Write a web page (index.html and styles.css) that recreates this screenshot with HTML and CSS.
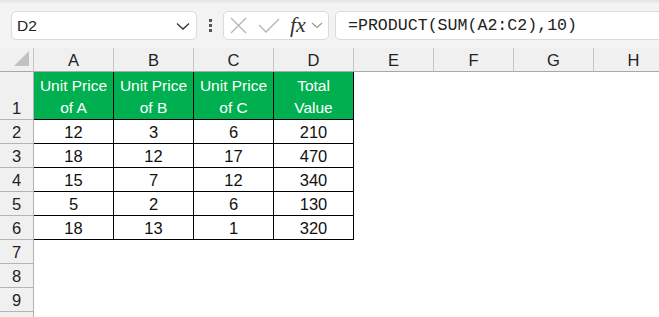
FILE: index.html
```html
<!DOCTYPE html>
<html lang="en">
<head>
    <meta charset="UTF-8">
    <meta name="viewport" content="width=device-width, initial-scale=1.0">
    <title>PRODUCT with SUM</title>
    <link rel="stylesheet" href="styles.css">
</head>
<body>

    <div class="toolbar">
        <div class="namebox">
            <span class="cell-ref">D2</span>
            <svg class="chevron" width="14" height="8" viewBox="0 0 14 8">
                <polyline points="1,1.5 7,7 13,1.5" />
            </svg>
        </div>

        <div class="dots">
            <span></span><span></span><span></span>
        </div>

        <div class="fx-box">
            <svg class="icon-x" width="17" height="17" viewBox="0 0 17 17">
                <line x1="1" y1="1" x2="16" y2="16" />
                <line x1="16" y1="1" x2="1" y2="16" />
            </svg>
            <svg class="icon-check" width="22" height="15" viewBox="0 0 22 15">
                <polyline points="1,7 8,14 21,1" />
            </svg>
            <span class="fx">fx</span>
            <svg class="icon-drop" width="12" height="7" viewBox="0 0 12 7">
                <polyline points="1,1 6,5.5 11,1" />
            </svg>
        </div>

        <div class="formula">=PRODUCT(SUM(A2:C2),10)</div>
    </div>

    <div class="sheet">
        <!-- column headers -->
        <div class="corner"><span class="tri"></span></div>
        <div class="col-head">A</div>
        <div class="col-head">B</div>
        <div class="col-head">C</div>
        <div class="col-head">D</div>
        <div class="col-head">E</div>
        <div class="col-head">F</div>
        <div class="col-head">G</div>
        <div class="col-head">H</div>

        <!-- row 1 -->
        <div class="row-head tall">1</div>
        <div class="cell data green">Unit Price<br>of A</div>
        <div class="cell data green">Unit Price<br>of B</div>
        <div class="cell data green">Unit Price<br>of C</div>
        <div class="cell data green">Total<br>Value</div>
        <div class="cell"></div><div class="cell"></div><div class="cell"></div><div class="cell"></div>

        <!-- row 2 -->
        <div class="row-head">2</div>
        <div class="cell data">12</div>
        <div class="cell data">3</div>
        <div class="cell data">6</div>
        <div class="cell data">210</div>
        <div class="cell"></div><div class="cell"></div><div class="cell"></div><div class="cell"></div>

        <!-- row 3 -->
        <div class="row-head">3</div>
        <div class="cell data">18</div>
        <div class="cell data">12</div>
        <div class="cell data">17</div>
        <div class="cell data">470</div>
        <div class="cell"></div><div class="cell"></div><div class="cell"></div><div class="cell"></div>

        <!-- row 4 -->
        <div class="row-head">4</div>
        <div class="cell data">15</div>
        <div class="cell data">7</div>
        <div class="cell data">12</div>
        <div class="cell data">340</div>
        <div class="cell"></div><div class="cell"></div><div class="cell"></div><div class="cell"></div>

        <!-- row 5 -->
        <div class="row-head">5</div>
        <div class="cell data">5</div>
        <div class="cell data">2</div>
        <div class="cell data">6</div>
        <div class="cell data">130</div>
        <div class="cell"></div><div class="cell"></div><div class="cell"></div><div class="cell"></div>

        <!-- row 6 -->
        <div class="row-head">6</div>
        <div class="cell data">18</div>
        <div class="cell data">13</div>
        <div class="cell data">1</div>
        <div class="cell data">320</div>
        <div class="cell"></div><div class="cell"></div><div class="cell"></div><div class="cell"></div>

        <!-- empty rows -->
        <div class="row-head">7</div>
        <div class="cell"></div><div class="cell"></div><div class="cell"></div><div class="cell"></div>
        <div class="cell"></div><div class="cell"></div><div class="cell"></div><div class="cell"></div>

        <div class="row-head">8</div>
        <div class="cell"></div><div class="cell"></div><div class="cell"></div><div class="cell"></div>
        <div class="cell"></div><div class="cell"></div><div class="cell"></div><div class="cell"></div>

        <div class="row-head">9</div>
        <div class="cell"></div><div class="cell"></div><div class="cell"></div><div class="cell"></div>
        <div class="cell"></div><div class="cell"></div><div class="cell"></div><div class="cell"></div>

        <!-- row 10 only peeks in at the bottom edge -->
        <div class="row-head"></div>
        <div class="cell"></div><div class="cell"></div><div class="cell"></div><div class="cell"></div>
        <div class="cell"></div><div class="cell"></div><div class="cell"></div><div class="cell"></div>
    </div>

</body>
</html>
```

FILE: styles.css
```css
body {
    margin: 0;
    padding: 0;
    width: 659px;
    height: 317px;
    overflow: hidden;
    background-color: #fff;
    font-family: 'Liberation Sans', Arial, sans-serif;
    color: #1a1a1a;
}

/* formula bar area */

.toolbar {
    display: flex;
    align-items: flex-start;
    height: 48px;
    padding: 11px 0 0 11px;
    box-sizing: border-box;
    background: linear-gradient(to bottom, #e3e3e3 0px, #efefef 3px, #f3f3f3 5px);
}

.namebox {
    display: flex;
    align-items: center;
    justify-content: space-between;
    width: 186px;
    height: 29px;
    box-sizing: border-box;
    padding: 0 6px 0 5px;
    background-color: #fff;
    border: 1px solid #dadada;
    border-radius: 5px;
}

.cell-ref {
    font-size: 15.5px;
    color: #222;
}

.chevron polyline {
    fill: none;
    stroke: #333;
    stroke-width: 1.3;
}

.dots {
    display: flex;
    flex-direction: column;
    align-items: center;
    gap: 2px;
    width: 26px;
    padding-top: 8px;
}

.dots span {
    width: 3px;
    height: 3px;
    background-color: #555;
}

.fx-box {
    display: flex;
    align-items: center;
    width: 106px;
    height: 29px;
    box-sizing: border-box;
    background-color: #fff;
    border: 1px solid #dadada;
    border-radius: 5px;
}

.icon-x {
    margin-left: 6px;
}

.icon-x line,
.icon-check polyline {
    fill: none;
    stroke: #b4b4b4;
    stroke-width: 1.3;
}

.icon-check {
    margin-left: 11px;
}

.fx {
    margin-left: 10px;
    margin-top: -2px;
    font-family: 'Liberation Serif', 'Times New Roman', serif;
    font-style: italic;
    font-size: 22px;
    color: #333;
    line-height: 1;
}

.icon-drop {
    margin-left: 5px;
}

.icon-drop polyline {
    fill: none;
    stroke: #999;
    stroke-width: 1.2;
}

.formula {
    flex: 1;
    margin-left: 6px;
    margin-right: -10px;
    height: 29px;
    box-sizing: border-box;
    padding: 0 0 0 12px;
    background-color: #fff;
    border: 1px solid #dadada;
    border-radius: 5px;
    font-family: 'Liberation Mono', 'Courier New', monospace;
    font-size: 16.6px;
    line-height: 28px;
    color: #222;
}

/* the grid */

.sheet {
    display: grid;
    grid-template-columns: 34px repeat(8, 80px);
    grid-template-rows: 24px 48px repeat(9, 24px);
}

.sheet > div {
    box-sizing: border-box;
}

.corner {
    display: flex;
    align-items: flex-end;
    justify-content: flex-end;
    padding: 0 4px 5px 0;
    background-color: #f0f0f0;
    border-right: 1px solid #c4c4c4;
    border-bottom: 1px solid #a8a8a8;
}

.tri {
    width: 15px;
    height: 15px;
    background-color: #c2c2c2;
    clip-path: polygon(100% 0, 100% 100%, 0 100%);
}

.col-head {
    display: flex;
    align-items: center;
    justify-content: center;
    padding-top: 1px;
    background-color: #f0f0f0;
    border-right: 1px solid #c4c4c4;
    border-bottom: 1px solid #a8a8a8;
    font-size: 16.5px;
    color: #222;
}

.row-head {
    display: flex;
    align-items: center;
    justify-content: center;
    padding-top: 1px;
    background-color: #f0f0f0;
    border-right: 1px solid #b4b4b4;
    border-bottom: 1px solid #b4b4b4;
    font-size: 16.5px;
    color: #222;
}

.row-head.tall {
    align-items: flex-end;
    line-height: 22px;
}

.cell {
    display: flex;
    align-items: center;
    justify-content: center;
    padding-top: 1px;
    font-size: 16.5px;
    color: #111;
}

.cell.data {
    border-right: 1px solid #000;
    border-bottom: 1px solid #000;
}

.cell.green {
    align-items: flex-end;
    padding-top: 0;
    background-color: #00b050;
    color: #fff;
    font-size: 15.5px;
    line-height: 22px;
    text-align: center;
}
```
